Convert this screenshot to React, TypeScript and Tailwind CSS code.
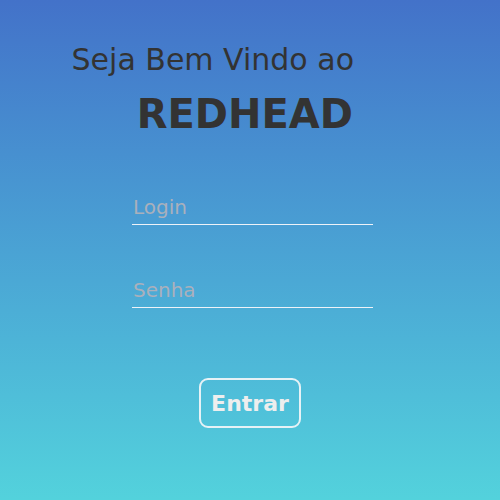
import React from 'react'

const App = () => {
    return (
        <div className="w-[500px] h-[500px] bg-gradient-to-b from-[#4372c9] to-[#53d2dc] font-['DejaVu_Sans',sans-serif] text-[#333333] flex flex-col">
            <div className="flex flex-col items-end w-[283px] ml-[71px] mt-[40px]">
                <h1 className="text-[30px] leading-[40px]">Seja Bem Vindo ao</h1>
                <h2 className="text-[40px] leading-[40px] font-bold mt-[14px] mr-[1px]">REDHEAD</h2>
            </div>
            <form className="flex flex-col items-center mt-[58px] pl-[5px]">
                <input
                    placeholder="Login"
                    className="w-[241px] h-[33px] px-[1px] pb-[2px] bg-transparent border-b-[1.5px] border-[#eef2f8] text-[20px] outline-none placeholder:text-[#aab0bc]"
                />
                <input
                    type="password"
                    placeholder="Senha"
                    className="w-[241px] h-[33px] px-[1px] pb-[2px] mt-[50px] bg-transparent border-b-[1.5px] border-[#eef2f8] text-[20px] outline-none placeholder:text-[#aab0bc]"
                />
            </form>
            <div className="flex justify-center mt-[70px]">
                <button
                    type="button"
                    className="w-[102px] h-[50px] rounded-[9px] border-2 border-[#e6f2f6] text-[#eeeeee] text-[22px] font-bold"
                >
                    Entrar
                </button>
            </div>
        </div>
    )
}

export default App
